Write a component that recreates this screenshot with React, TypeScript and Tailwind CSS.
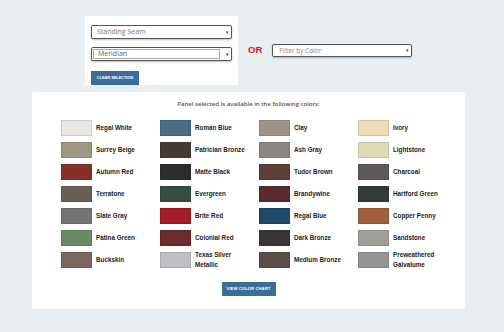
import React from "react";

const COLORS = [
  { name: "Regal White", hex: "#e8e7e4" },
  { name: "Roman Blue", hex: "#4a6e8a" },
  { name: "Clay", hex: "#a09387" },
  { name: "Ivory", hex: "#ecdcb7" },
  { name: "Surrey Beige", hex: "#a09683" },
  { name: "Patrician Bronze", hex: "#453a35" },
  { name: "Ash Gray", hex: "#8a8682" },
  { name: "Lightstone", hex: "#e0dab5" },
  { name: "Autumn Red", hex: "#853028" },
  { name: "Matte Black", hex: "#2d2d2e" },
  { name: "Tudor Brown", hex: "#5a3e37" },
  { name: "Charcoal", hex: "#5f5a5a" },
  { name: "Terratone", hex: "#6b5e56" },
  { name: "Evergreen", hex: "#384c42" },
  { name: "Brandywine", hex: "#5a2b33" },
  { name: "Hartford Green", hex: "#323b37" },
  { name: "Slate Gray", hex: "#747474" },
  { name: "Brite Red", hex: "#a31c28" },
  { name: "Regal Blue", hex: "#1f4a6b" },
  { name: "Copper Penny", hex: "#a05e3b" },
  { name: "Patina Green", hex: "#6b8a66" },
  { name: "Colonial Red", hex: "#6e2c2a" },
  { name: "Dark Bronze", hex: "#3a3536" },
  { name: "Sandstone", hex: "#a09e98" },
  { name: "Buckskin", hex: "#7a6860" },
  { name: "Texas Silver Metallic", hex: "#c0c0c4" },
  { name: "Medium Bronze", hex: "#5a4d48" },
  { name: "Preweathered Galvalume", hex: "#959596" },
];

const Arrow = () => (
  <span className="ml-auto mr-[2px] text-[5px] leading-none text-[#333]">▾</span>
);

export default function App() {
  return (
    <div className="w-[504px] h-[332px] bg-[#e8eef2] pt-[16px] font-['Open_Sans',sans-serif]">
      {/* top selectors */}
      <div className="flex items-center pl-[85px]">
        <div className="w-[153px] h-[69px] bg-white pl-[6px] pt-[9px]">
          <div className="flex items-center w-[141px] h-[14px] border border-[#555] rounded-[2px] bg-white shadow-[0_1px_2px_rgba(0,0,0,0.25)] pl-[5px]">
            <span className="text-[7px] text-[#777]">Standing Seam</span>
            <Arrow />
          </div>
          <div className="flex items-center w-[141px] h-[14px] mt-[8px] border border-[#555] rounded-[2px] bg-white shadow-[0_1px_2px_rgba(0,0,0,0.25)] pl-[1px]">
            <div className="w-[127px] h-[10px] border border-[#aaa] flex items-center pl-[4px]">
              <span className="text-[7px] text-[#666]">Meridian</span>
            </div>
            <Arrow />
          </div>
          <button className="mt-[8px] w-[48px] h-[14px] bg-[#3b6d99] text-white text-[4px] font-bold tracking-tight font-['Liberation_Sans',sans-serif]">
            CLEAR SELECTION
          </button>
        </div>
        <span className="ml-[10px] text-[9.5px] font-bold text-[#d0202a] font-['Liberation_Sans',sans-serif]">OR</span>
        <div className="ml-[10px] flex items-center w-[140px] h-[13px] border border-[#555] rounded-[2px] bg-white shadow-[0_1px_2px_rgba(0,0,0,0.25)] pl-[6px]">
          <span className="text-[6.5px] text-[#888]">Filter by Color</span>
          <Arrow />
        </div>
      </div>

      {/* color card */}
      <div className="ml-[32px] mt-[7px] w-[433px] h-[217px] bg-white rounded-[3px] pt-[8px] pl-[29px]">
        <p className="text-center pr-[29px] text-[6px] font-semibold text-[#555] leading-[8px]">
          Panel selected is available in the following colors:
        </p>
        <div className="grid grid-cols-[repeat(4,99px)] gap-y-[6px] mt-[12px]">
          {COLORS.map((c) => (
            <div key={c.name} className="flex items-center gap-[4px] h-[16px]">
              <div
                className="w-[31px] h-[16px] shrink-0 border border-black/10"
                style={{ backgroundColor: c.hex }}
              />
              <span className="text-[6.3px] font-bold text-[#222] leading-[10px] w-[56px] font-['Liberation_Sans',sans-serif]">
                {c.name}
              </span>
            </div>
          ))}
        </div>
        <div className="flex justify-center pr-[29px] mt-[14px]">
          <button className="w-[54px] h-[14px] bg-[#3b6d99] text-white text-[4.3px] font-bold font-['Liberation_Sans',sans-serif]">
            VIEW COLOR CHART
          </button>
        </div>
      </div>
    </div>
  );
}
